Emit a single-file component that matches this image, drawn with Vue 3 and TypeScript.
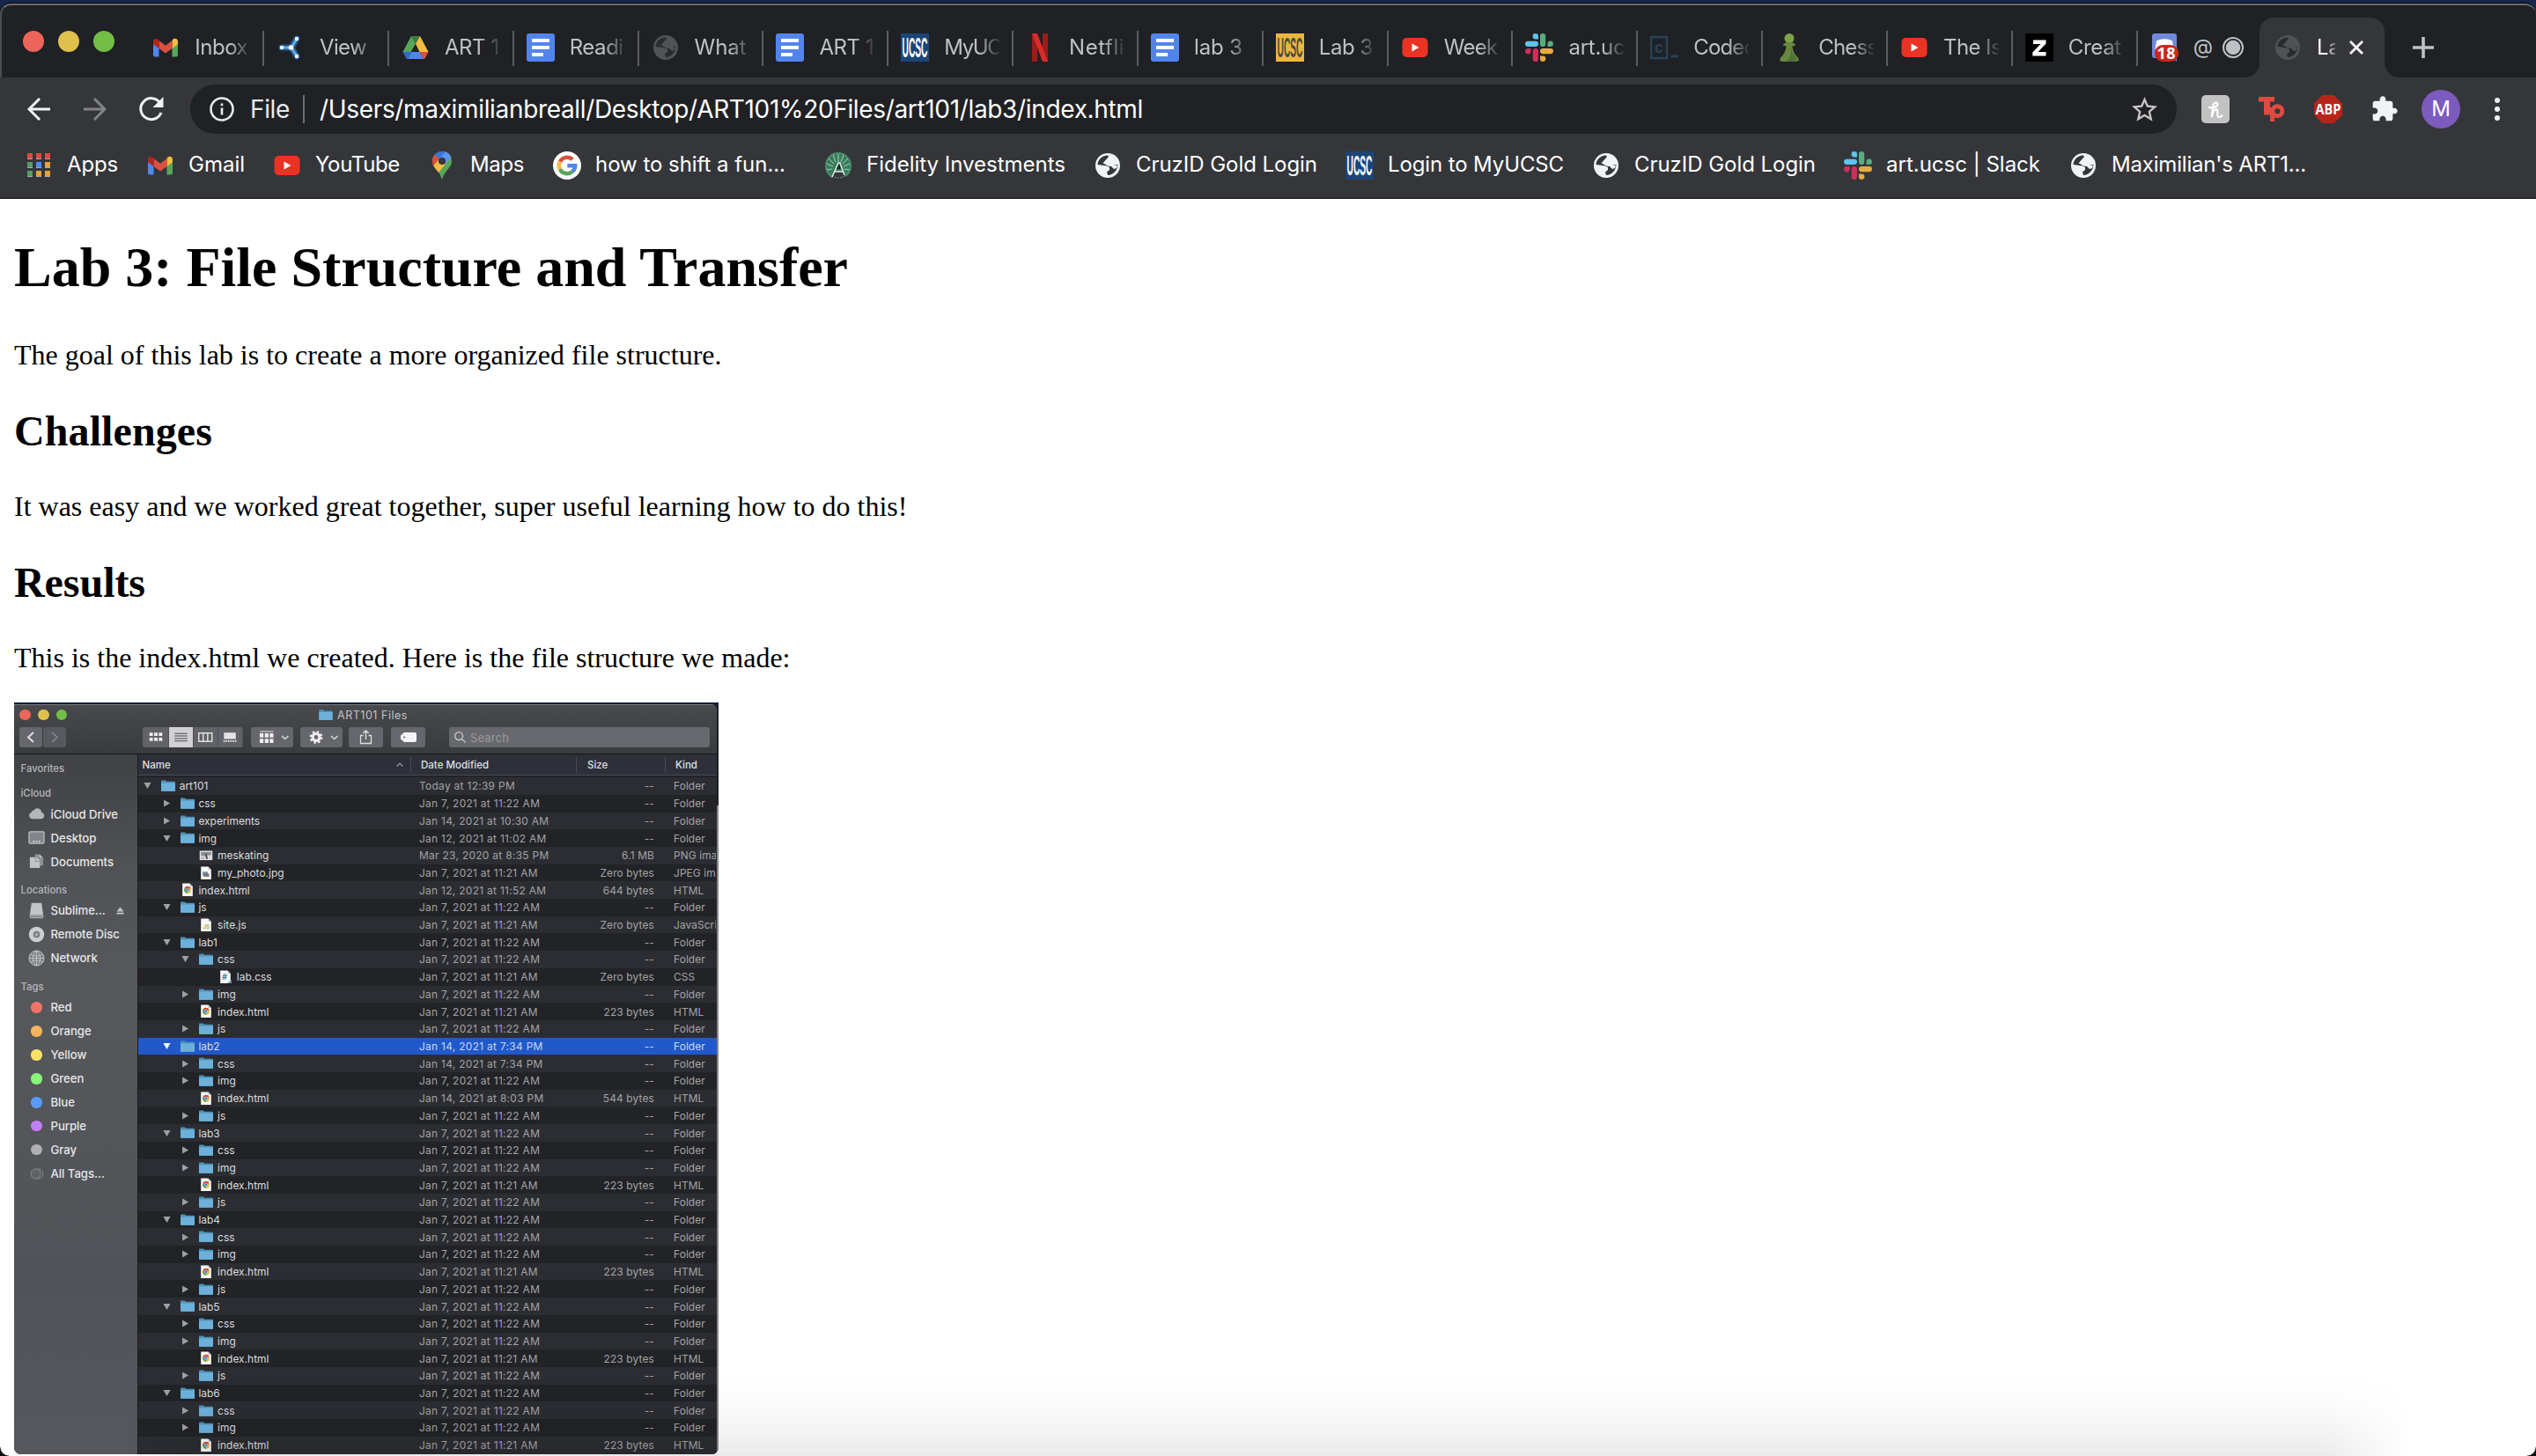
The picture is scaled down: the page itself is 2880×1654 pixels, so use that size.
<script setup lang="ts">
interface Tab { icon: string; title: string; fit: number }
interface Bookmark { icon: string; label: string; width: number; fit: number }
interface Row { level: number; kind: 'open' | 'closed' | 'file'; icon: string; name: string; date: string; size: string; type: string; selected?: boolean }

// Spreads the letters of a label so that it takes up the given width.
const vFit = {
  mounted(el: HTMLElement, binding: { value: number }) {
    if (!binding.value) return
    const range = document.createRange()
    range.selectNodeContents(el)
    const natural = range.getBoundingClientRect().width
    const count = (el.textContent ?? '').length
    el.style.letterSpacing = `${(binding.value - natural) / count}px`
  },
}

const tabs: Tab[] = [
  { icon: 'gmail', title: 'Inbox', fit: 60 },
  { icon: 'nodes', title: 'View', fit: 53 },
  { icon: 'drive', title: 'ART 1', fit: 62 },
  { icon: 'docs', title: 'Readi', fit: 61 },
  { icon: 'globe-dim', title: 'What', fit: 59 },
  { icon: 'docs', title: 'ART 1', fit: 62 },
  { icon: 'ucsc-blue', title: 'MyUC', fit: 65 },
  { icon: 'netflix', title: 'Netfli', fit: 63 },
  { icon: 'docs', title: 'lab 3', fit: 55 },
  { icon: 'ucsc-gold', title: 'Lab 3', fit: 61 },
  { icon: 'youtube', title: 'Week', fit: 61 },
  { icon: 'slack', title: 'art.uc', fit: 64 },
  { icon: 'code', title: 'Codec', fit: 70 },
  { icon: 'pawn', title: 'Chess', fit: 67 },
  { icon: 'youtube', title: 'The Is', fit: 66 },
  { icon: 'zeit', title: 'Creat', fit: 60 },
]

const bookmarks: Bookmark[] = [
  { icon: 'apps', label: 'Apps', width: 138, fit: 58 },
  { icon: 'gmail', label: 'Gmail', width: 144, fit: 64 },
  { icon: 'youtube', label: 'YouTube', width: 176, fit: 96 },
  { icon: 'maps', label: 'Maps', width: 142, fit: 61 },
  { icon: 'google', label: 'how to shift a fun...', width: 308, fit: 216 },
  { icon: 'fidelity', label: 'Fidelity Investments', width: 306, fit: 226 },
  { icon: 'globe', label: 'CruzID Gold Login', width: 286, fit: 206 },
  { icon: 'ucsc-blue', label: 'Login to MyUCSC', width: 280, fit: 200 },
  { icon: 'globe', label: 'CruzID Gold Login', width: 286, fit: 206 },
  { icon: 'slack', label: 'art.ucsc | Slack', width: 256, fit: 175 },
  { icon: 'globe', label: "Maximilian's ART1...", width: 280, fit: 221 },
]

const D22 = 'Jan 7, 2021 at 11:22 AM'
const D21 = 'Jan 7, 2021 at 11:21 AM'
const folder = (level: number, name: string, open = false, date = D22, selected = false): Row =>
  ({ level, kind: open ? 'open' : 'closed', icon: 'folder', name, date, size: '--', type: 'Folder', selected })
const file = (level: number, icon: string, name: string, date: string, size: string, type: string): Row =>
  ({ level, kind: 'file', icon, name, date, size, type })
const lab = (n: number): Row[] => [
  folder(1, `lab${n}`, true),
  folder(2, 'css'),
  folder(2, 'img'),
  file(2, 'html', 'index.html', D21, '223 bytes', 'HTML'),
  folder(2, 'js'),
]

const rows: Row[] = [
  folder(0, 'art101', true, 'Today at 12:39 PM'),
  folder(1, 'css'),
  folder(1, 'experiments', false, 'Jan 14, 2021 at 10:30 AM'),
  folder(1, 'img', true, 'Jan 12, 2021 at 11:02 AM'),
  file(2, 'png', 'meskating', 'Mar 23, 2020 at 8:35 PM', '6.1 MB', 'PNG image'),
  file(2, 'jpg', 'my_photo.jpg', D21, 'Zero bytes', 'JPEG image'),
  file(1, 'html', 'index.html', 'Jan 12, 2021 at 11:52 AM', '644 bytes', 'HTML'),
  folder(1, 'js', true),
  file(2, 'js', 'site.js', D21, 'Zero bytes', 'JavaScript'),
  folder(1, 'lab1', true),
  folder(2, 'css', true),
  file(3, 'css', 'lab.css', D21, 'Zero bytes', 'CSS'),
  folder(2, 'img'),
  file(2, 'html', 'index.html', D21, '223 bytes', 'HTML'),
  folder(2, 'js'),
  folder(1, 'lab2', true, 'Jan 14, 2021 at 7:34 PM', true),
  folder(2, 'css', false, 'Jan 14, 2021 at 7:34 PM'),
  folder(2, 'img'),
  file(2, 'html', 'index.html', 'Jan 14, 2021 at 8:03 PM', '544 bytes', 'HTML'),
  folder(2, 'js'),
  ...lab(3),
  ...lab(4),
  ...lab(5),
  ...lab(6).slice(0, 4),
]

const sidebar = [
  { title: 'Favorites', items: [] },
  { title: 'iCloud', items: [{ icon: 'cloud', label: 'iCloud Drive' }, { icon: 'desktop', label: 'Desktop' }, { icon: 'documents', label: 'Documents' }] },
  { title: 'Locations', items: [{ icon: 'disk', label: 'Sublime...', eject: true }, { icon: 'disc', label: 'Remote Disc' }, { icon: 'network', label: 'Network' }] },
  {
    title: 'Tags',
    items: [
      { color: '#f27467', label: 'Red' },
      { color: '#f6b45c', label: 'Orange' },
      { color: '#fbe163', label: 'Yellow' },
      { color: '#86f57a', label: 'Green' },
      { color: '#5a9bfa', label: 'Blue' },
      { color: '#c37ff8', label: 'Purple' },
      { color: '#b0b0b3', label: 'Gray' },
      { icon: 'alltags', label: 'All Tags...' },
    ],
  },
] as { title: string; items: { icon?: string; color?: string; label: string; eject?: boolean }[] }[]
</script>

<template>
  <div class="screen">
    <svg class="sprite" width="0" height="0" aria-hidden="true">
      <defs>
        <symbol id="i-gmail" viewBox="0 0 32 32">
          <path d="M2 11v13.5a2 2 0 0 0 2 2h4.500V15z" fill="#4f86ec" />
          <path d="M30 11v13.500a2 2 0 0 1-2 2h-4.500V15z" fill="#58a55c" />
          <path d="M23.500 8v9L30 12.200V9c0-3.200-3.600-4.300-5.500-2.400z" fill="#f2bd42" />
          <path d="M8.500 17V8L16 13.700 23.500 8v9L16 22.600z" fill="#d95040" />
          <path d="M2 9v3.200L8.500 17V8l-1-1.200C5.500 5 2 6 2 9z" fill="#b3261e" />
        </symbol>
        <symbol id="i-nodes" viewBox="0 0 32 32">
          <path d="M6 16h11l6-10M17 16l6 10" stroke="#1d5a96" stroke-width="7" fill="none" stroke-linecap="round" stroke-linejoin="round" />
          <path d="M6 16h11l6-10M17 16l6 10" stroke="#6fa9d8" stroke-width="3" fill="none" stroke-linecap="round" />
          <g fill="#fff"><circle cx="6" cy="16" r="2.200" /><circle cx="16.500" cy="16" r="2.800" /><circle cx="23" cy="6" r="2.200" /><circle cx="23" cy="26" r="2.200" /></g>
        </symbol>
        <symbol id="i-drive" viewBox="0 0 32 32">
          <path d="M11 3h10l-5 8.700z" fill="#3b7d3f" />
          <path d="M11 3l5 8.700L6.500 28 1.500 21z" fill="#58a55c" />
          <path d="M21 3l9.500 18H20.500L16 11.700z" fill="#f2bd42" />
          <path d="M1.500 21h10L7 29c-1 0-1.700-.5-2.200-1.500z" fill="#3568c9" />
          <path d="M11.500 21h9l4.500 8H7z" fill="#4f86ec" />
          <path d="M20.500 21h10l-3.300 6.500c-.5 1-1.200 1.500-2.200 1.500z" fill="#d95040" />
        </symbol>
        <symbol id="i-docs" viewBox="0 0 32 32">
          <rect width="32" height="32" rx="3" fill="#5285ec" />
          <path d="M6 6h20v4H6zM6 14h20v4H6zM6 22h13v4H6z" fill="#fff" />
        </symbol>
        <symbol id="i-globe" viewBox="0 0 32 32">
          <circle cx="16" cy="16" r="14" fill="#f1f3f4" />
          <path d="M4.500 15C4.800 9.500 9.500 4.700 15.500 4.500L17 5.500 16.500 9l-3 1-1 2 3 1.500 2.500 2.500h4l2-1h3.500c-.3 6.500-5 11.800-11.500 12l-1-3.500 3-2.500v-3l-3-1.500-6.500-1z" fill="#35363a" />
          <path d="M17 6h4l1 3-2 2-1 3 4 1 4 1-1 3-3 1-3-3-4-.5-3-2-2.500-1z" fill="#f1f3f4" />
        </symbol>
        <symbol id="i-globe-dim" viewBox="0 0 32 32">
          <circle cx="16" cy="16" r="14" fill="#505256" />
          <path d="M4.500 15C4.800 9.500 9.500 4.700 15.500 4.500L17 5.500 16.500 9l-3 1-1 2 3 1.500 2.500 2.500h4l2-1h3.500c-.3 6.500-5 11.800-11.500 12l-1-3.500 3-2.500v-3l-3-1.500-6.500-1z" fill="#2a2b2f" />
          <path d="M17 6h4l1 3-2 2-1 3 4 1 4 1-1 3-3 1-3-3-4-.5-3-2-2.500-1z" fill="#505256" />
        </symbol>
        <symbol id="i-ucsc-blue" viewBox="0 0 32 32">
          <rect width="32" height="32" fill="#1b4578" />
          <text x="1.500" y="26.500" textLength="29" lengthAdjust="spacingAndGlyphs" font-family="'Liberation Sans', sans-serif" font-weight="bold" font-size="31" fill="#fff">UCSC</text>
        </symbol>
        <symbol id="i-ucsc-gold" viewBox="0 0 32 32">
          <rect width="32" height="32" fill="#ecb63f" />
          <text x="1.500" y="26.500" textLength="29" lengthAdjust="spacingAndGlyphs" font-family="'Liberation Sans', sans-serif" font-weight="bold" font-size="31" fill="#4a4a3c">UCSC</text>
        </symbol>
        <symbol id="i-netflix" viewBox="0 0 32 32">
          <path d="M7 0h6v32H7zM19 0h6v32h-6z" fill="#9c1b1b" />
          <path d="M7 0h6l12 32h-6z" fill="#d92b27" />
        </symbol>
        <symbol id="i-youtube" viewBox="0 0 32 32">
          <rect x="1.500" y="5" width="29" height="22" rx="5" fill="#ea3323" />
          <path d="M12.500 11.500v9l8-4.500z" fill="#fff" />
        </symbol>
        <symbol id="i-slack" viewBox="0 0 32 32">
          <g fill="#5fc3ee"><rect x="0" y="8.700" width="15" height="6.200" rx="3.100" /><path d="M15 6.500h-3A3.200 3.200 0 1 1 15 3.200z" /></g>
          <g fill="#56ad7d"><rect x="17" y="0" width="6.200" height="15" rx="3.100" /><path d="M25.500 14.900v-3a3.200 3.200 0 1 1 3.200 3z" /></g>
          <g fill="#e5ac43"><rect x="17" y="17" width="15" height="6.200" rx="3.100" /><path d="M17 25.500h3a3.200 3.200 0 1 1-3 3.200z" /></g>
          <g fill="#cc305a"><rect x="8.700" y="17" width="6.200" height="15" rx="3.100" /><path d="M6.500 17v3a3.200 3.200 0 1 1-3.200-3z" /></g>
        </symbol>
        <symbol id="i-code" viewBox="0 0 32 32">
          <rect x="1" y="4" width="18" height="24" fill="none" stroke="#27435a" stroke-width="2.500" />
          <text x="5" y="21.500" font-family="'Liberation Sans', sans-serif" font-weight="bold" font-size="18" fill="#27435a">c</text>
          <path d="M23.500 26H32" stroke="#27435a" stroke-width="3" />
        </symbol>
        <symbol id="i-pawn" viewBox="0 0 32 32">
          <circle cx="16" cy="5.500" r="5.500" fill="#7da24a" />
          <path d="M9 13.500c0-2 3-3.500 7-3.500s7 1.500 7 3.500l-3.500 1c.5 6 3 9.500 6 12.500 2 2.500 1.500 5-1.500 5H8c-3 0-3.500-2.500-1.500-5 3-3 5.500-6.500 6-12.500z" fill="#69893f" />
          <path d="M18 15c.5 6 3 9 6 12 1 1.500 1 4-1 5H12c6-3 6-11 6-17z" fill="#4f7236" />
        </symbol>
        <symbol id="i-zeit" viewBox="0 0 32 32">
          <rect width="32" height="32" fill="#000" />
          <path d="M9 7.500h14.500v4L14.500 21h9v4.500H8.300v-4L17.500 12H9z" fill="#fff" />
        </symbol>
        <symbol id="i-discord" viewBox="0 0 32 32">
          <path d="M3 0h22a3 3 0 0 1 3 3v29l-5-4H3a3 3 0 0 1-3-3V3a3 3 0 0 1 3-3z" fill="#7289da" />
          <path d="M5 8.500C10 5.500 18 5.500 23 8.500l1.500 9.500H3.500z" fill="#fff" />
          <rect x="3" y="13" width="27" height="19" rx="9" fill="#c9281c" />
          <text x="5.500" y="29" textLength="21" font-family="'Open Sans', sans-serif" font-weight="bold" font-size="18" fill="#fff">18</text>
        </symbol>
        <symbol id="i-apps" viewBox="0 0 32 32">
          <g fill="#dd4b3e"><path d="M3 2h6v6H3zM13 2h6v6h-6zM23 2h6v6h-6z" /></g>
          <path d="M3 12h6v6H3zM3 22h6v6H3z" fill="#559d5e" /><path d="M13 12h6v6h-6z" fill="#4f8bee" />
          <path d="M23 12h6v6h-6zM13 22h6v6h-6zM23 22h6v6h-6z" fill="#e2a33c" />
          <path d="M3 8.500h6M13 8.500h6M23 8.500h6M3 18.500h6M13 18.500h6M23 18.500h6M3 28.500h6M13 28.500h6M23 28.500h6" stroke="#a9a9ab" stroke-width="1" />
        </symbol>
        <symbol id="i-maps" viewBox="0 0 32 32">
          <path d="M16 0C9.500 0 5 5 5 11c0 8 8 10 11 21 3-11 11-13 11-21C27 5 22.500 0 16 0z" fill="#58a55c" />
          <path d="M26.300 6.800L12 24c-1.800-3-4.500-5-6-8L20 0z" fill="#f2bd42" />
          <path d="M19.700.5C23 1.500 25.500 3.800 26.300 6.800L19.500 15l-7-7z" fill="#5b94f5" />
          <path d="M7.700 3.800C5.900 6 5 8.300 5 11c0 2 .5 3.600 1.200 5L13 8.400z" fill="#d95040" />
          <path d="M16 0c-3.500 0-6.300 1.400-8.300 3.800L13 8.300 20 .6C18.800.2 17.500 0 16 0z" fill="#3b73d9" />
          <circle cx="16" cy="11" r="4" fill="#35363a" />
        </symbol>
        <symbol id="i-google" viewBox="0 0 32 32">
          <circle cx="16" cy="16" r="16" fill="#fff" />
          <g fill="none" stroke-width="4.500">
            <path d="M22.300 9.200A9.200 9.200 0 0 0 7.900 11.600" stroke="#d95040" />
            <path d="M7.900 11.600a9.200 9.200 0 0 0 0 8.800" stroke="#f2bd42" />
            <path d="M7.900 20.400a9.200 9.200 0 0 0 14.200 2.500" stroke="#58a55c" />
            <path d="M22.100 22.900A9.200 9.200 0 0 0 25.200 16.200H16.300" stroke="#4f86ec" />
          </g>
        </symbol>
        <symbol id="i-fidelity" viewBox="0 0 32 32">
          <path d="M16 1A15 15 0 0 0 1 16c0 6 2 10 8 15l3-8h8l5 6c4-3 6-8 6-13A15 15 0 0 0 16 1z" fill="#387d5c" />
          <circle cx="16" cy="16" r="14" fill="none" stroke="#7fae98" stroke-width="1" stroke-dasharray="2 1.500" />
          <path d="M16 12V3M13 12L10 4M19 12l3-8M11 14L5 8M21 14l6-6M10 17l-7-3M22 17l7-3M9 20l-6 1M23 20l6 1" stroke="#a9cdbb" stroke-width="1" />
          <path d="M9 29l7-16 2 0 5 14M11 23h10" stroke="#dcebe3" stroke-width="1.500" fill="none" />
          <path d="M14 20l3-6 2 6z" fill="#1d1f21" />
        </symbol>
        <symbol id="i-folder" viewBox="0 0 16 13">
          <path d="M0 1.200C0 .5.400.200 1 .200h3.800l1.400 1.400H15c.6 0 1 .3 1 .9v9.300c0 .5-.3.800-.8.800H.800c-.5 0-.8-.3-.8-.8z" fill="#4f93b8" />
          <path d="M0 3.200h16v8.600c0 .5-.3.800-.8.800H.800c-.5 0-.8-.3-.8-.8z" fill="#6db1db" />
        </symbol>
        <symbol id="i-html" viewBox="0 0 16 16">
          <path d="M2 .5h8.500L14 4v11.500H2z" fill="#f8f8f6" /><path d="M10.500.5V4H14z" fill="#c5c5c5" />
          <circle cx="8" cy="8" r="4" fill="#e6b73a" />
          <path d="M4.500 6A4 4 0 0 1 11.600 6.300L8 8z" fill="#cf4434" /><path d="M4.500 6A4 4 0 0 0 8 12V8z" fill="#4b9a57" />
          <circle cx="8" cy="8" r="1.900" fill="#4a7fe0" stroke="#eee" stroke-width=".5" />
        </symbol>
        <symbol id="i-png" viewBox="0 0 16 16"><rect x=".5" y="2.500" width="15" height="11" fill="#dcdcdc" /><path d="M2 4h12v3.500l-3 .5-2-1-3 2-4-1z" fill="#8c8f93" /><path d="M7 6l2 0 1 6H8z" fill="#44474d" /><path d="M2 10h4v2H2z" fill="#aeb3b7" /></symbol>
        <symbol id="i-jpg" viewBox="0 0 16 16"><path d="M2 .5h8.500L14 4v11.500H2z" fill="#f8f8f6" /><path d="M10.500.5V4H14z" fill="#c5c5c5" /><path d="M4 6.500h6v4H4z" fill="#6d93bb" /><path d="M5.500 8.500h6v4h-6z" fill="#74777c" /><path d="M4 10h5l1 1H4z" fill="#b5654c" /></symbol>
        <symbol id="i-js" viewBox="0 0 16 16"><path d="M2 .5h8.500L14 4v11.500H2z" fill="#f8f8f6" /><path d="M10.500.5V4H14z" fill="#c5c5c5" /><text x="4.300" y="12.300" font-family="Inter, sans-serif" font-weight="bold" font-size="6.500" fill="#a9b23a">JS</text></symbol>
        <symbol id="i-css" viewBox="0 0 16 16"><path d="M2 .5h8.500L14 4v11.500H2z" fill="#f8f8f6" /><path d="M10.500.5V4H14z" fill="#c5c5c5" /><text x="4.200" y="11.500" font-family="Inter, sans-serif" font-weight="bold" font-size="9" fill="#3f7d9e">#</text><path d="M10 15.500l5-4v4z" fill="#5b9fd0" /></symbol>
        <symbol id="i-cloud" viewBox="0 0 20 20"><path d="M4.500 16A4 4 0 0 1 3.800 8.300a3 3 0 0 1 3-2.500A5 5 0 0 1 16 8.500 3.800 3.800 0 0 1 15.800 16z" fill="#b4b6ba" /></symbol>
        <symbol id="i-desktop" viewBox="0 0 20 20"><rect x="1" y="3" width="18" height="14" rx="1.500" fill="#83858a" stroke="#bdbfc3" stroke-width="1.300" /><path d="M5.500 14.500h2M9 14.500h2M12.500 14.500h2" stroke="#d8dadd" stroke-width="1.600" /></symbol>
        <symbol id="i-documents" viewBox="0 0 20 20"><path d="M8 1.500h6l4 4V15H8z" fill="#8e9095" /><path d="M2 5h6.500v5.500H14V18H2z" fill="#bfc1c5" /><path d="M9.500 5l4.500 4.500H9.500z" fill="#c9cbcf" /><path d="M13.500 1.500l3.500 4h-3.500z" fill="#bfc1c5" /></symbol>
        <symbol id="i-disk" viewBox="0 0 20 20"><path d="M4 .8h12l2 14H2z" fill="#c2c4c7" /><rect x="1.800" y="14.500" width="16.400" height="4.700" rx="1.500" fill="#a5a7aa" /><path d="M3 17h14" stroke="#6b6d70" stroke-width=".8" /></symbol>
        <symbol id="i-disc" viewBox="0 0 20 20"><circle cx="10" cy="10" r="9.200" fill="#cdced1" /><circle cx="10" cy="10" r="4" fill="#77797d" /><circle cx="10" cy="10" r="2" fill="#a9abaf" /></symbol>
        <symbol id="i-network" viewBox="0 0 20 20"><circle cx="10" cy="10" r="9" fill="#7d7f83" stroke="#c6c8cb" stroke-width="1" /><path d="M1.500 10h17M3 5.500c4 2.500 10 2.500 14 0M3 14.500c4-2.500 10-2.500 14 0M10 1v18M10 1C4 6 4 14 10 19M10 1c6 5 6 13 0 18" stroke="#c6c8cb" stroke-width=".9" fill="none" /></symbol>
        <symbol id="i-alltags" viewBox="0 0 20 20"><circle cx="12" cy="10" r="5.800" fill="none" stroke="#8c8e92" stroke-width="1" /><circle cx="9" cy="10" r="5.800" fill="#5f6165" stroke="#8c8e92" stroke-width="1" /></symbol>
      </defs>
    </svg>

    <header class="chrome">
      <div class="tabstrip">
        <div class="lights"><i class="red"></i><i class="yellow"></i><i class="green"></i></div>
        <div v-for="(tab, i) in tabs" :key="i" class="tab">
          <svg class="ico"><use :href="'#i-' + tab.icon" /></svg>
          <span class="title"><span v-fit="tab.fit">{{ tab.title }}</span></span>
        </div>
        <div class="tab chat">
          <svg class="ico"><use href="#i-discord" /></svg>
          <span class="at">@</span>
          <svg class="rec" viewBox="0 0 24 24"><circle cx="12" cy="12" r="11" fill="none" stroke="#bdc1c6" stroke-width="2" /><circle cx="12" cy="12" r="8.300" fill="#bdc1c6" /></svg>
        </div>
        <div class="tab active">
          <svg class="ico"><use href="#i-globe-dim" /></svg>
          <span class="title">La</span>
          <svg class="close" viewBox="0 0 18 18"><path d="M2 2l14 14M16 2L2 16" stroke="#fff" stroke-width="2.800" /></svg>
        </div>
        <svg class="plus" viewBox="0 0 24 24"><path d="M12 0v24M0 12h24" stroke="#bdc1c6" stroke-width="3.600" /></svg>
      </div>

      <div class="toolbar">
        <svg class="nav back" viewBox="0 0 26 26"><path d="M26 13H2M14 1L2 13l12 12" fill="none" stroke="#f1f3f4" stroke-width="3" /></svg>
        <svg class="nav forward" viewBox="0 0 26 26"><path d="M0 13h24M12 1l12 12-12 12" fill="none" stroke="#818387" stroke-width="3" /></svg>
        <svg class="nav reload" viewBox="0 0 28 28"><path d="M23.500 6.500A12 12 0 1 0 25 18" fill="none" stroke="#f1f3f4" stroke-width="3" /><path d="M27.500 0v12h-12z" fill="#f1f3f4" /></svg>
        <div class="omnibox">
          <svg class="info" viewBox="0 0 28 28"><circle cx="14" cy="14" r="12.500" fill="none" stroke="#e8eaed" stroke-width="2.600" /><path d="M12.700 12.500h2.600v8h-2.600zM12.700 7.500h2.600v2.700h-2.600z" fill="#e8eaed" /></svg>
          <span v-fit="45" class="scheme">File</span>
          <i class="bar"></i>
          <span v-fit="935" class="url">/Users/maximilianbreall/Desktop/ART101%20Files/art101/lab3/index.html</span>
          <svg class="star" viewBox="0 0 24 24"><path fill="#c5c5c5" d="M22 9.240l-7.190-.62L12 2 9.190 8.630 2 9.240l5.460 4.730L5.820 21 12 17.270 18.180 21l-1.630-7.030L22 9.240zM12 15.400l-3.760 2.270 1-4.280-3.320-2.880 4.380-.38L12 6.100l1.710 4.040 4.380.38-3.320 2.880 1 4.280L12 15.400z" /></svg>
        </div>
        <svg class="ext honey" viewBox="0 0 32 32"><rect width="32" height="32" rx="5" fill="#c2c2c2" /><path d="M8.500 14c2 .8 9.500.3 10-3.500.2-3-4.800-3.200-5.500 3l-1.300 11.500c1-5.500 3.300-9 5.300-9 3 0-.5 9 3 9 1.500 0 2.500-.8 3.500-1.800" fill="none" stroke="#fff" stroke-width="2.100" stroke-linecap="round" /></svg>
        <svg class="ext tp" viewBox="0 0 32 32"><path d="M1 2h18v5.500h-5V22.500H7V7.500H1z" fill="#dd4b41" /><path d="M14 14h5v16h-5z" fill="#dd4b41" /><circle cx="22.300" cy="18.200" r="5.500" fill="none" stroke="#dd4b41" stroke-width="5" /></svg>
        <svg class="ext abp" viewBox="0 0 32 32"><path d="M9.400 0h13.200L32 9.400v13.200L22.600 32H9.400L0 22.600V9.400z" fill="#b92419" /><text x="1.500" y="22" textLength="29" lengthAdjust="spacingAndGlyphs" font-family="'Open Sans', sans-serif" font-weight="bold" font-size="16.500" fill="#fff">ABP</text></svg>
        <svg class="ext puzzle" viewBox="0 0 24 24"><path fill="#f1f3f4" d="M20.500 11H19V7c0-1.100-.9-2-2-2h-4V3.500C13 2.120 11.880 1 10.500 1S8 2.120 8 3.500V5H4c-1.100 0-1.990.9-1.990 2v3.800H3.500c1.490 0 2.700 1.210 2.700 2.700s-1.210 2.700-2.700 2.700H2V20c0 1.100.9 2 2 2h3.800v-1.500c0-1.490 1.210-2.700 2.700-2.700 1.490 0 2.700 1.210 2.700 2.700V22H17c1.100 0 2-.9 2-2v-4h1.500c1.380 0 2.500-1.120 2.500-2.500S21.880 11 20.500 11z" /></svg>
        <span class="avatar">M</span>
        <span class="dots"><i></i><i></i><i></i></span>
      </div>

      <nav class="bookmarks">
        <a v-for="(b, i) in bookmarks" :key="i" :style="{ width: b.width + 'px' }">
          <svg class="ico"><use :href="'#i-' + b.icon" /></svg><span v-fit="b.fit">{{ b.label }}</span>
        </a>
      </nav>
    </header>

    <main class="page">
      <h1 v-fit="947">Lab 3: File Structure and Transfer</h1>
      <p>The goal of this lab is to create a more organized file structure.</p>
      <h2 class="first" v-fit="225">Challenges</h2>
      <p>It was easy and we worked great together, super useful learning how to do this!</p>
      <h2 v-fit="149">Results</h2>
      <p>This is the index.html we created. Here is the file structure we made:</p>

      <section class="shot">
        <div class="finder">
          <div class="fhead">
            <div class="ftitle">
              <div class="flights"><i class="red"></i><i class="yellow"></i><i class="green"></i></div>
              <svg class="ffolder"><use href="#i-folder" /></svg>
              <span v-fit="80">ART101 Files</span>
            </div>
            <div class="fbar">
              <span class="fbtn navb"><svg viewBox="0 0 26 23"><path d="M16 6l-6 5.500 6 5.500" stroke="#e4e4e6" stroke-width="1.800" fill="none" /></svg></span>
              <span class="fbtn navb fwd"><svg viewBox="0 0 26 23"><path d="M10 6l6 5.500-6 5.500" stroke="#88898d" stroke-width="1.600" fill="none" /></svg></span>
              <span class="seg">
                <svg viewBox="0 0 30 23"><path d="M8 6h4v4H8zM13.500 6h4v4h-4zM19 6h4v4h-4zM8 12h4v4H8zM13.500 12h4v4h-4zM19 12h4v4h-4z" fill="#ededef" /></svg>
                <svg class="on" viewBox="0 0 28 23"><path d="M6.500 7h15M6.500 10h15M6.500 13h15M6.500 16h15" stroke="#4a4b4f" stroke-width="1.100" /></svg>
                <svg viewBox="0 0 28 23"><path d="M6 6.500h15.500v10H6zM11.200 6.500v10M16.400 6.500v10" stroke="#dedfe1" stroke-width="1.500" fill="none" /></svg>
                <svg viewBox="0 0 28 23"><path d="M6.500 6h14v7.500h-14z" fill="#e4e4e6" /><path d="M6 16h15.500" stroke="#e4e4e6" stroke-width="2" stroke-dasharray="1.800 .9" /></svg>
              </span>
              <span class="fbtn menu"><svg viewBox="0 0 48 23"><path d="M10 5h15.500" stroke="#dedfe1" stroke-width="1.200" /><path d="M10 7h4.200v4.800H10zM15.700 7h4.200v4.800h-4.200zM21.300 7h4.200v4.800h-4.200zM10 13.300h4.200v4.800H10zM15.700 13.300h4.200v4.800h-4.200zM21.300 13.300h4.200v4.800h-4.200z" fill="#ededef" /><path d="M35 10l3.700 3.500 3.700-3.500" stroke="#d5d6d8" stroke-width="1.600" fill="none" /></svg></span>
              <span class="fbtn menu"><svg viewBox="0 0 48 23"><circle cx="18" cy="11.500" r="4" fill="none" stroke="#ededef" stroke-width="3.200" /><circle cx="18" cy="11.500" r="6.200" fill="none" stroke="#ededef" stroke-width="2.400" stroke-dasharray="2.400 2.470" /><path d="M35 10l3.700 3.500 3.700-3.500" stroke="#d5d6d8" stroke-width="1.600" fill="none" /></svg></span>
              <span class="fbtn wide"><svg viewBox="0 0 39 23"><path d="M16.500 9.500h-3v9h12v-9h-3M19.500 14V4M16.300 7l3.200-3 3.200 3" stroke="#dedfe1" stroke-width="1.300" fill="none" /></svg></span>
              <span class="fbtn wide"><svg viewBox="0 0 39 23"><path d="M15 6h12a2 2 0 0 1 2 2v7a2 2 0 0 1-2 2H15l-4-3.500v-4z" fill="#f5f5f7" /><circle cx="15" cy="11.500" r="1.100" fill="#68696d" /></svg></span>
              <span class="search"><svg viewBox="0 0 16 16"><circle cx="6.500" cy="6.500" r="4.800" stroke="#c7c8cb" stroke-width="1.400" fill="none" /><path d="M10 10l4.500 4.500" stroke="#c7c8cb" stroke-width="1.500" /></svg><span v-fit="44">Search</span></span>
            </div>
          </div>
          <div class="fbody">
            <aside class="side">
              <template v-for="g in sidebar" :key="g.title">
                <h3>{{ g.title }}</h3>
                <div v-for="it in g.items" :key="it.label" class="sitem">
                  <svg v-if="it.icon" class="sico"><use :href="'#i-' + it.icon" /></svg>
                  <i v-else class="tag" :style="{ background: it.color }"></i>
                  <span>{{ it.label }}</span>
                  <svg v-if="it.eject" class="eject" viewBox="0 0 10 10"><path d="M5 .5L9.500 6h-9zM.5 7.500h9v2h-9z" fill="#c4c5c8" /></svg>
                </div>
              </template>
            </aside>
            <div class="list">
              <div class="cols">
                <span class="cname">Name</span>
                <svg class="caret" viewBox="0 0 8 5"><path d="M.7 4.500L4 1l3.300 3.500" stroke="#9a9ba0" stroke-width="1.200" fill="none" /></svg>
                <span class="cdate">Date Modified</span><span class="csize">Size</span><span class="ckind">Kind</span>
              </div>
              <div v-for="(r, i) in rows" :key="i" class="row" :class="{ sel: r.selected }">
                <div class="name" :style="{ paddingLeft: r.level * 21.7 + 5 + 'px' }">
                  <svg class="tri" viewBox="0 0 10 10"><path v-if="r.kind === 'open'" d="M.5 1h9L5 9z" /><path v-if="r.kind === 'closed'" d="M1.200.5v9L9 5z" /></svg>
                  <svg class="fico"><use :href="'#i-' + r.icon" /></svg>
                  <span>{{ r.name }}</span>
                </div>
                <span class="date">{{ r.date }}</span><span class="size">{{ r.size }}</span><span class="kind">{{ r.type }}</span>
              </div>
            </div>
          </div>
        </div>
        <div class="edge"></div>
      </section>
    </main>
    <div class="dockshade"></div>
    <i class="corner left"></i>
    <i class="corner right"></i>
  </div>
</template>

<style>
body { margin: 0; background: #fff; overflow: hidden; }
</style>

<style scoped>
.screen { position: relative; width: 2880px; height: 1654px; overflow: hidden; background: #fff; font-family: Inter, 'Liberation Sans', sans-serif; }
.sprite { position: absolute; }
svg { display: block; flex: none; }
i { display: block; flex: none; }
.ico { width: 32px; height: 32px; }
.red { background: #ed655a; }
.yellow { background: #e0c04c; }
.green { background: #72be47; }

.chrome { box-sizing: border-box; height: 226px; background: #18264b; padding-top: 4px; }
.tabstrip { box-sizing: border-box; display: flex; align-items: center; height: 84px; background: #202124; border-top: 2px solid #6b6c6e; border-left: 2px solid #4c4d50; border-radius: 12px 12px 0 0; padding-top: 14px; box-shadow: 0 -1px 0 #05070d; }
.lights { display: flex; gap: 16px; width: 131.200px; padding-left: 24px; margin-top: -14px; }
.lights i { width: 24px; height: 24px; border-radius: 50%; }
.tab { box-sizing: border-box; position: relative; display: flex; align-items: center; flex: none; width: 141.85px; height: 68px; padding-left: 15px; }
.tab:not(.chat):not(.active)::after { content: ''; position: absolute; right: -1px; top: 15px; width: 2px; height: 40px; background: #5b5d60; }
.title { margin-left: 17px; width: 63px; overflow: hidden; white-space: pre; font-size: 24px; line-height: 36px; color: #bdc1c6; mask-image: linear-gradient(90deg, #000 62%, transparent 104%); }
.chat { width: 139.200px; padding-left: 17px; }
.at { margin-left: 15px; width: 20px; font-size: 23px; color: #bdc1c6; margin-top: -3px; }
.rec { width: 24px; height: 24px; margin-left: 13px; }
.active { width: 142px; background: #35363a; border-radius: 16px 16px 0 0; padding-left: 16px; }
.active::before, .active::after { content: ''; position: absolute; bottom: 0; width: 16px; height: 16px; }
.active::before { left: -16px; background: radial-gradient(circle at 0 0, transparent 15.500px, #35363a 16px); }
.active::after { right: -16px; background: radial-gradient(circle at 100% 0, transparent 15.500px, #35363a 16px); }
.active .title { width: 21px; color: #fff; mask-image: linear-gradient(90deg, #000 50%, rgba(0, 0, 0, .3)); }
.close { width: 18px; height: 18px; margin-left: 15px; }
.plus { width: 24px; height: 24px; margin-left: 32px; }

.toolbar { display: flex; align-items: center; height: 72px; background: #35363a; padding-left: 31px; }
.nav { width: 26px; height: 26px; margin-right: 38px; }
.reload { width: 28px; height: 28px; margin: 0 30px 0 -1px; }
.omnibox { box-sizing: border-box; display: flex; align-items: center; width: 2256px; height: 56px; border-radius: 28px; background: #202124; padding: 0 19px 0 22px; font-size: 28px; color: #fff; white-space: nowrap; }
.info { width: 28px; height: 28px; }
.scheme { margin-left: 18px; width: 45px; color: #e8eaed; }
.bar { width: 2px; height: 32px; margin: 0 17px 0 15px; background: #6a6c70; }
.star { width: 35px; height: 35px; margin-left: auto; }
.ext { width: 32px; height: 32px; margin-left: 32px; }
.honey { margin-left: 28px; }
.avatar { width: 44px; height: 44px; margin-left: 26px; border-radius: 50%; background: #7b5bbd; color: #fff; font-size: 24px; line-height: 44px; text-align: center; }
.dots { display: flex; flex-direction: column; gap: 4px; margin-left: 39px; }
.dots i { width: 6px; height: 6px; border-radius: 50%; background: #f1f3f4; }

.bookmarks { box-sizing: border-box; display: flex; height: 66px; background: #35363a; border-bottom: 2px solid #29292c; padding-left: 28px; }
.bookmarks a { display: flex; align-items: center; gap: 16px; height: 56px; flex: none; color: #fff; font-size: 24px; white-space: nowrap; }
.bookmarks a span { line-height: 30px; padding-bottom: 2px; }

.page { padding: 0 16px; display: flow-root; font-family: 'Liberation Serif', serif; color: #000; }
h1, h2, p { width: max-content; white-space: nowrap; }
h1 { font-size: 64px; line-height: 74px; margin: 41.400px 0 43.400px; }
h2 { font-size: 48px; line-height: 55px; margin: 39.840px 0; }
h2.first { margin-bottom: 40.840px; }
p { font-size: 32px; line-height: 37px; margin: 0; }
h2 + p { margin-bottom: 32px; }

.shot { display: flex; width: 800px; height: 854px; background: #141d38; padding-top: 2px; box-sizing: border-box; font-family: Inter, sans-serif; border-radius: 0 0 8px 8px; overflow: hidden; }
.finder { width: 797.500px; height: 852px; overflow: hidden; border-top-right-radius: 6px; background: #222327; }
.edge { flex: 1; background: linear-gradient(#1d1f26 115px, #868789 115px); }
.fhead { box-sizing: border-box; height: 57px; background: linear-gradient(#48494d, #3a3b3e); border-top: 1px solid #77797d; border-bottom: 1.500px solid #17181a; }
.ftitle { display: flex; align-items: center; height: 22px; font-size: 12.500px; color: #c2c3c5; white-space: nowrap; }
.flights { display: flex; gap: 8px; width: 340px; padding-left: 6px; }
.flights i { width: 12.800px; height: 12.800px; border-radius: 50%; }
.ffolder { width: 16px; height: 12.500px; margin-right: 5px; }
.fbar { display: flex; align-items: center; height: 23px; padding-left: 6px; margin-top: 3px; }
.fbtn { height: 23px; border-radius: 3px; background: #66676c; flex: none; }
.fbtn svg, .seg svg { width: 100%; height: 23px; }
.navb { width: 26px; margin-right: 1px; }
.fwd { background: #58595e; margin-right: 87px; }
.seg { display: flex; width: 114px; height: 23px; border-radius: 3px; overflow: hidden; background: #626368; margin-right: 9px; }
.seg svg { box-sizing: border-box; width: 28px; flex: none; border-right: 1px solid #505156; }
.seg svg:first-child { width: 30px; }
.seg .on { background: #d0d0d5; }
.menu { width: 48px; margin-right: 8px; }
.menu + .wide { margin-left: -1px; }
.wide { width: 39px; margin-right: 9px; }
.search { display: flex; align-items: center; width: 296px; height: 23px; margin-left: 18px; border-radius: 3px; background: #68696e; color: #96979b; font-size: 13px; }
.search svg { width: 15px; height: 15px; margin: 0 4px 0 5px; }

.fbody { display: flex; height: 795px; }
.side { box-sizing: border-box; width: 140.500px; background: linear-gradient(#3f4145, #505256 130px, #56585c 250px, #505357 600px, #56585d); border-right: 1.500px solid #1a1b1d; padding-top: 6px; flex: none; }
.side h3 { margin: 0 0 0 7.500px; height: 20px; font-size: 11.300px; line-height: 20px; font-weight: 500; color: #b6b7ba; }
.side h3 + h3 { margin-top: 9px; height: 19px; line-height: 19px; }
.sitem + h3 { margin-top: 9px; }
.sitem { display: flex; align-items: center; height: 26.970px; padding-left: 16px; font-size: 13.200px; font-weight: 500; color: #e6e7e8; letter-spacing: -0.05px; white-space: nowrap; }
.sico { width: 19px; height: 19px; margin-right: 6.500px; }
.tag { width: 12.500px; height: 12.500px; border-radius: 50%; margin: 0 9.700px 0 3.300px; }
.eject { width: 9px; height: 9px; margin-left: 12px; }

.list { flex: 1; min-width: 0; }
.cols { box-sizing: border-box; display: flex; align-items: center; height: 24px; background: #2e3039; border-bottom: 1px solid #4a4b54; padding-left: 5px; font-size: 11.500px; font-weight: 500; color: #dfe0e2; margin-bottom: 2px; }
.cname { width: 288px; }
.caret { width: 8px; height: 5px; }
.cdate, .csize, .ckind { box-sizing: border-box; height: 18px; line-height: 18px; padding-left: 11px; border-left: 1px solid #484a52; }
.cdate { width: 188px; margin-left: 8.500px; }
.csize { width: 101px; padding-left: 12px; }
.row { display: flex; align-items: center; height: 19.710px; background: #222327; color: #a2a3a6; font-size: 11.900px; white-space: nowrap; }
.row:nth-child(even) { background: #2c2d32; }
.row.sel { background: #2159cb; color: #c8d6f3; }
.name { box-sizing: border-box; display: flex; align-items: center; width: 319.500px; color: #dcdddf; letter-spacing: .04px; }
.tri { width: 9px; height: 9px; fill: #a0a1a4; margin: 0 11px 0 1.500px; }
.sel .tri { fill: #fff; }
.fico { width: 16px; height: 15.500px; margin-right: 4.700px; }
.date { width: 175px; letter-spacing: .32px; }
.size { width: 92px; text-align: right; letter-spacing: .15px; }
.kind { margin-left: 22px; width: 48px; overflow: hidden; letter-spacing: .1px; }

.dockshade { position: absolute; left: 140px; right: 140px; bottom: 0; height: 90px; background: linear-gradient(rgba(0, 0, 0, 0), rgba(0, 0, 0, .015) 35%, rgba(0, 0, 0, .08)); mask-image: linear-gradient(90deg, transparent, #000 100px, #000 calc(100% - 100px), transparent); }
.corner { position: absolute; bottom: 0; width: 10px; height: 10px; }
.corner.left { left: 0; background: radial-gradient(circle at 100% 0, transparent 9px, #0b0d10 10px); }
.corner.right { right: 0; background: radial-gradient(circle at 0 0, transparent 9px, #0b0d10 10px); }
</style>
